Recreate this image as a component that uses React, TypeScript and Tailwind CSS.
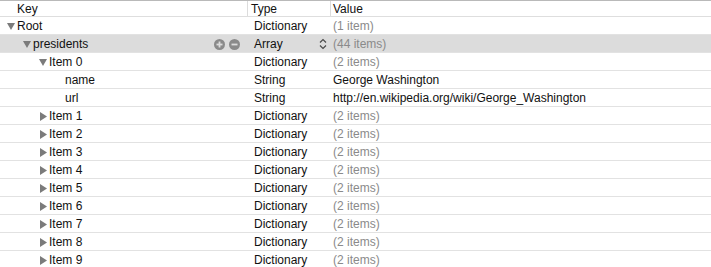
import React from 'react';

type Row = {
  key: string;
  level: number;
  toggle?: 'open' | 'closed';
  type: string;
  value: string;
  muted?: boolean;
  selected?: boolean;
};

const rows: Row[] = [
  { key: 'Root', level: 0, toggle: 'open', type: 'Dictionary', value: '(1 item)', muted: true },
  { key: 'presidents', level: 1, toggle: 'open', type: 'Array', value: '(44 items)', muted: true, selected: true },
  { key: 'Item 0', level: 2, toggle: 'open', type: 'Dictionary', value: '(2 items)', muted: true },
  { key: 'name', level: 3, type: 'String', value: 'George Washington' },
  { key: 'url', level: 3, type: 'String', value: 'http://en.wikipedia.org/wiki/George_Washington' },
  ...Array.from({ length: 9 }, (_, i) => ({
    key: `Item ${i + 1}`,
    level: 2,
    toggle: 'closed' as const,
    type: 'Dictionary',
    value: '(2 items)',
    muted: true,
  })),
];

const Disclosure = ({ state }: { state?: 'open' | 'closed' }) => {
  if (!state) return <span className="w-[9px] shrink-0" />;
  return (
    <span className="w-[9px] shrink-0 flex items-center">
      {state === 'open' ? (
        <svg width="8" height="7" viewBox="0 0 8 7" className="-ml-px">
          <path d="M0 0 L8 0 L4 7 Z" fill="#7b7b7b" />
        </svg>
      ) : (
        <svg width="7" height="9" viewBox="0 0 7 9">
          <path d="M0 0 L7 4.5 L0 9 Z" fill="#7b7b7b" />
        </svg>
      )}
    </span>
  );
};

const CircleBtn = ({ plus }: { plus?: boolean }) => (
  <svg width="11" height="11" viewBox="0 0 11 11">
    <circle cx="5.5" cy="5.5" r="5.5" fill="#8a8a8a" />
    <rect x="2.5" y="4.6" width="6" height="1.8" fill="#dcdcdc" />
    {plus && <rect x="4.6" y="2.5" width="1.8" height="6" fill="#dcdcdc" />}
  </svg>
);

const Stepper = () => (
  <svg width="8" height="12" viewBox="0 0 8 12">
    <path d="M1 4.5 L4 1.5 L7 4.5" stroke="#4a4a4a" strokeWidth="1.2" fill="none" />
    <path d="M1 7.5 L4 10.5 L7 7.5" stroke="#4a4a4a" strokeWidth="1.2" fill="none" />
  </svg>
);

const App = () => {
  return (
    <div
      className="w-[711px] h-[267px] overflow-hidden bg-white text-[12px] text-[#111] leading-none"
      style={{ fontFamily: '"Liberation Sans", Arial, sans-serif' }}
    >
      <div className="grid grid-cols-[248px_83px_1fr] h-[17px] border-t border-t-[#b9b9b9] border-b border-b-[#dedede] items-center">
        <div className="pl-[17px] flex items-center h-full border-r border-r-[#dcdcdc]">Key</div>
        <div className="pl-[3px] flex items-center h-full border-r border-r-[#dcdcdc]">Type</div>
        <div className="pl-[2px]">Value</div>
      </div>
      {rows.map((r) => (
        <div
          key={r.key}
          className={`grid grid-cols-[248px_83px_1fr] h-[18px] pt-px items-center border-b border-b-[#e2e2e2] ${
            r.selected ? 'bg-[#dcdcdc]' : 'bg-white'
          }`}
        >
          <div className="flex items-center h-full pr-[8px]" style={{ paddingLeft: 8 + r.level * 16 }}>
            <Disclosure state={r.toggle} />
            <span className="flex-1">{r.key}</span>
            {r.selected && (
              <span className="flex items-center gap-[4px]">
                <CircleBtn plus />
                <CircleBtn />
              </span>
            )}
          </div>
          <div className="flex items-center h-full pl-[6px] pr-[4px]">
            <span className="flex-1">{r.type}</span>
            {r.selected && <Stepper />}
          </div>
          <div className={`pl-[2px] ${r.muted ? 'text-[#8a8a8a]' : ''}`}>{r.value}</div>
        </div>
      ))}
    </div>
  );
};

export default App;
